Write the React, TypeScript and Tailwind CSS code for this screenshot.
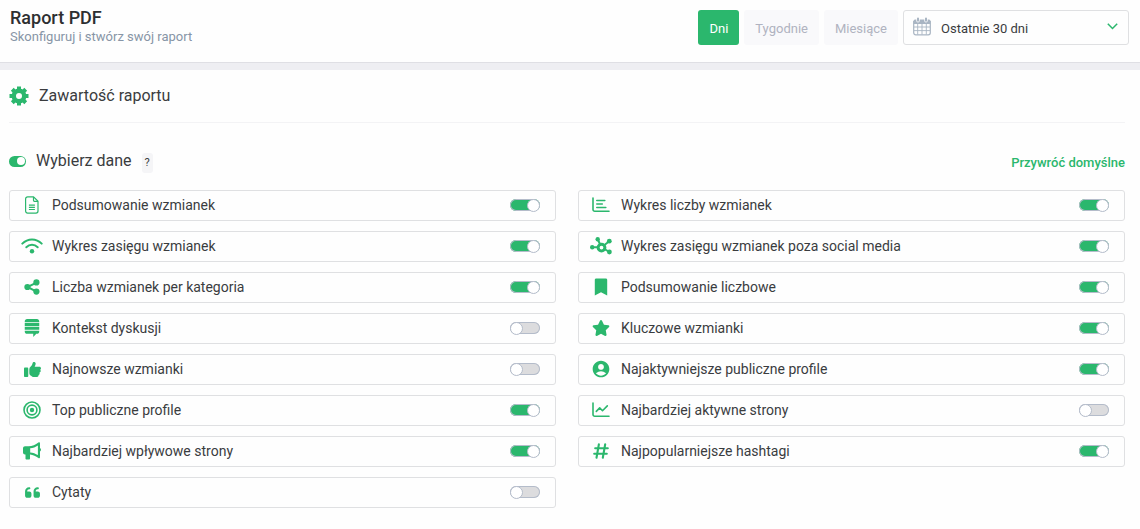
import { useState } from 'react'
import type { ReactNode } from 'react'
import { FaStackExchange, FaStar } from 'react-icons/fa'
import { FaQuoteLeft, FaThumbsUp } from 'react-icons/fa6'
import { MdAccountCircle } from 'react-icons/md'

const GearIcon = () => (
  <svg viewBox="0 0 20 20" width="20" height="20" fill="none" stroke="#2bb76d">
    <circle cx="10" cy="10" r="5.2" strokeWidth="4.4" />
    {[0, 45, 90, 135].map((a) => (
      <g key={a} transform={`rotate(${a} 10 10)`} strokeWidth="4">
        <path d="M10 .5v4.5M10 15v4.5" />
      </g>
    ))}
  </svg>
)

const FileIcon = () => (
  <svg viewBox="0 0 14 18" width="14" height="18" fill="none" stroke="currentColor" strokeWidth="1.2" strokeLinejoin="round">
    <path d="M2.6 .9h6l4.4 4.3v9.9a2 2 0 0 1-2 2H2.6a2 2 0 0 1-2-2V2.9a2 2 0 0 1 2-2z" />
    <path d="M8.5 1v3.2a1.2 1.2 0 0 0 1.2 1.2H13" />
    <path d="M3.9 9.2h6M3.9 11.4h6M3.9 13.5h6" />
  </svg>
)

const WifiIcon = () => (
  <svg viewBox="0 0 22 16" width="22" height="16" fill="none" stroke="currentColor" strokeWidth="2" strokeLinecap="round">
    <path d="M1.3 5.6C6.8 0 15.2 0 20.7 5.6" />
    <path d="M5.3 9.2c3.3-3.2 8.1-3.2 11.4 0" />
    <circle cx="11" cy="13.2" r="2.2" fill="currentColor" stroke="none" />
  </svg>
)

const ShareIcon = () => (
  <svg viewBox="0 0 16 16" width="16" height="16" fill="currentColor">
    <path d="M12.6 3.6L3.4 8l9.2 4.6" fill="none" stroke="currentColor" strokeWidth="2" />
    <circle cx="12.4" cy="3.4" r="3.1" />
    <circle cx="3.4" cy="8" r="3.1" />
    <circle cx="12.4" cy="12.6" r="3.1" />
  </svg>
)

const TargetIcon = () => (
  <svg viewBox="0 0 18 18" width="18" height="18" fill="none" stroke="currentColor" strokeWidth="1.6">
    <circle cx="9" cy="9" r="8" />
    <circle cx="9" cy="9" r="4.9" />
    <circle cx="9" cy="9" r="2.2" fill="currentColor" stroke="none" />
  </svg>
)

const MegaphoneIcon = () => (
  <svg viewBox="0 0 18 18" width="18" height="18" fill="currentColor">
    <path
      fillRule="evenodd"
      d="M15.4 .5c.7-.5 1.6-.1 1.6.8v4.8c.6.3 1 .9 1 1.7s-.4 1.4-1 1.7v5.8c0 .9-.9 1.3-1.6.8-2.5-2.1-5.2-3.4-8.4-3.7v4c0 .6-.4 1.100-1 1.100H3.600c-.6 0-1.100-.5-1.100-1.100v-4H2c-1.100 0-2-.9-2-2V6.200c0-1.100.9-2 2-2h3.600c3.700 0 7-1.300 9.800-3.700zM14.900 3.600C12.600 5.200 10 6.100 7.200 6.300v4.100c2.800.2 5.400 1.100 7.700 2.700z"
    />
  </svg>
)

const BarsIcon = () => (
  <svg viewBox="0 0 18 16" width="18" height="16" fill="none" stroke="currentColor" strokeWidth="1.6" strokeLinecap="round" strokeLinejoin="round">
    <path d="M1 1v11.5a1.7 1.7 0 0 0 1.7 1.7H17" />
    <path d="M4.8 3.5h8M4.8 7h5.5M4.8 10.5h9" />
  </svg>
)

const TrendIcon = () => (
  <svg viewBox="0 0 18 16" width="18" height="16" fill="none" stroke="currentColor" strokeWidth="1.6" strokeLinecap="round" strokeLinejoin="round">
    <path d="M1 1v11.5a1.7 1.7 0 0 0 1.7 1.7H17" />
    <path d="M4.3 9.4l3.4-3.5 2.8 2.8 4.8-4.8" />
  </svg>
)

const NetworkIcon = () => (
  <svg viewBox="0 0 22 18" width="22" height="18" fill="currentColor">
    <path d="M11.5 10.3H2M11.5 10.3L7.8 2.5M11.5 10.3l7.8-6M11.5 10.3l8 4.7" fill="none" stroke="currentColor" strokeWidth="2" />
    <circle cx="11.5" cy="10.6" r="3.4" fill="#fefefe" stroke="currentColor" strokeWidth="3" />
    <circle cx="2.2" cy="10.3" r="2.2" />
    <circle cx="7.7" cy="2.3" r="2.2" />
    <circle cx="19.3" cy="4.2" r="2.4" />
    <circle cx="19.4" cy="15" r="2.4" />
  </svg>
)

const BookmarkIcon = () => (
  <svg viewBox="0 0 14 18" width="14" height="18" fill="currentColor">
    <path d="M2.2 .5h9.6c.8 0 1.4.6 1.4 1.4v15.6L7 14.2.8 17.5V1.9C.8 1.1 1.4.5 2.2.5z" />
  </svg>
)

const HashIcon = () => (
  <svg viewBox="0 0 16 16" width="16" height="16" fill="none" stroke="currentColor" strokeWidth="2.1" strokeLinecap="round">
    <path d="M5.9 1.3L3.5 14.7M12.2 1.3L9.8 14.7M2.2 5.2h12.6M1.2 10.8h12.6" />
  </svg>
)

const CalendarIcon = () => (
  <svg viewBox="0 0 18 19" width="18" height="19" fill="none" stroke="#a9b5c3">
    <path d="M.7 4.5h16.6v11.3a2 2 0 0 1-2 2H2.7a2 2 0 0 1-2-2z" strokeWidth="1.2" />
    <path d="M4.7 6.5v11M9 6.5v11M13.3 6.5v11M1 10h16M1 13.6h16" strokeWidth=".9" />
    <path d="M2 2.5h14a1.5 1.5 0 0 1 1.5 1.5v3H.5V4A1.5 1.5 0 0 1 2 2.5z" fill="#a9b5c3" stroke="none" />
    <path d="M5 1.6v2.2M13 1.6v2.2" stroke="#fefefe" strokeWidth="3.4" strokeLinecap="round" />
    <path d="M5 1.5v2.3M13 1.5v2.3" strokeWidth="2" strokeLinecap="round" />
  </svg>
)

type Item = { id: string; label: string; icon: ReactNode; on: boolean }

const leftItems: Item[] = [
  { id: 'summary', label: 'Podsumowanie wzmianek', icon: <FileIcon />, on: true },
  { id: 'reach', label: 'Wykres zasięgu wzmianek', icon: <WifiIcon />, on: true },
  { id: 'category', label: 'Liczba wzmianek per kategoria', icon: <ShareIcon />, on: true },
  { id: 'context', label: 'Kontekst dyskusji', icon: <FaStackExchange size={18} />, on: false },
  { id: 'latest', label: 'Najnowsze wzmianki', icon: <FaThumbsUp size={17} />, on: false },
  { id: 'top-profiles', label: 'Top publiczne profile', icon: <TargetIcon />, on: true },
  { id: 'influential', label: 'Najbardziej wpływowe strony', icon: <MegaphoneIcon />, on: true },
  { id: 'quotes', label: 'Cytaty', icon: <FaQuoteLeft size={17} />, on: false },
]

const rightItems: Item[] = [
  { id: 'count-chart', label: 'Wykres liczby wzmianek', icon: <BarsIcon />, on: true },
  { id: 'reach-no-social', label: 'Wykres zasięgu wzmianek poza social media', icon: <NetworkIcon />, on: true },
  { id: 'numbers', label: 'Podsumowanie liczbowe', icon: <BookmarkIcon />, on: true },
  { id: 'key', label: 'Kluczowe wzmianki', icon: <FaStar size={18} />, on: true },
  { id: 'active-profiles', label: 'Najaktywniejsze publiczne profile', icon: <MdAccountCircle size={20} />, on: true },
  { id: 'active-sites', label: 'Najbardziej aktywne strony', icon: <TrendIcon />, on: false },
  { id: 'hashtags', label: 'Najpopularniejsze hashtagi', icon: <HashIcon />, on: true },
]

const periods = ['Dni', 'Tygodnie', 'Miesiące']

const defaults = Object.fromEntries([...leftItems, ...rightItems].map((i) => [i.id, i.on]))

export default function App() {
  const [period, setPeriod] = useState('Dni')
  const [enabled, setEnabled] = useState<Record<string, boolean>>(defaults)

  const anyOn = Object.values(enabled).some(Boolean)

  const setAll = (on: boolean) => {
    setEnabled(Object.fromEntries(Object.keys(defaults).map((id) => [id, on])))
  }

  const renderItem = (item: Item) => (
    <li key={item.id}>
      <label className="flex h-[31px] cursor-pointer items-center rounded-[3px] border border-[#dfe0e2] pr-[15px] pb-px pl-[11px]">
        <span className="flex w-[22px] justify-center text-[#2bb76d]">{item.icon}</span>
        <span className="ml-[9px] flex-1 text-sm">{item.label}</span>
        <input
          type="checkbox"
          checked={enabled[item.id]}
          onChange={(e) => setEnabled({ ...enabled, [item.id]: e.target.checked })}
          className="flex h-3 w-[30px] cursor-pointer appearance-none items-center rounded-full bg-[#dcdcde] ring-1 ring-[#b4bcca] ring-inset before:size-[13px] before:rounded-full before:border before:border-[#b4bcca] before:bg-white checked:justify-end checked:bg-[#2bb76d]"
        />
      </label>
    </li>
  )

  return (
    <div className="min-h-screen bg-[#fefefe] font-['Roboto',sans-serif] text-[#3a3c3e]">
      <header className="flex justify-between border-b border-[#dfdfe4] pt-[9px] pr-[11px] pb-[15px] pl-[10px]">
        <div>
          <h1 className="text-lg leading-[18px] font-medium text-[#2d2f31]">Raport PDF</h1>
          <p className="text-[13px] leading-5 text-[#8795a6]">Skonfiguruj i stwórz swój raport</p>
        </div>
        <div className="mt-px flex h-[35px] gap-[5px]">
          {periods.map((p) => (
            <button
              key={p}
              onClick={() => setPeriod(p)}
              className={`cursor-pointer rounded-[3px] px-[11px] pt-0.5 text-[13px] ${period === p ? 'bg-[#2bb76d] text-white' : 'bg-[#f9f9fb] text-[#b0b3c0]'}`}
            >
              {p}
            </button>
          ))}
          <div className="relative">
            <select
              aria-label="Zakres dat"
              className="h-full w-[226px] cursor-pointer appearance-none rounded-[3px] border border-[#dfe0e2] pt-0.5 pl-[37px] text-[13px]"
            >
              <option>Ostatnie 30 dni</option>
            </select>
            <span className="pointer-events-none absolute top-[7px] left-[10px]">
              <CalendarIcon />
            </span>
            <svg viewBox="0 0 11 7" width="11" height="7" className="pointer-events-none absolute top-[13px] right-[11px]" fill="none" stroke="#2bb76d" strokeWidth="1.5">
              <path d="M.8 .8l4.7 4.7L10.2 .8" />
            </svg>
          </div>
        </div>
      </header>
      <div className="h-[7px] bg-[#eeeef2]" />

      <main className="pr-[15px] pl-[9px]">
        <div className="flex h-[53px] items-center gap-[10px] border-b border-[#f3f3f5]">
          <GearIcon />
          <h2 className="text-base">Zawartość raportu</h2>
        </div>

        <div className="flex items-center justify-between pt-[26px] pb-[17px]">
          <div className="flex items-center">
            <label className="flex cursor-pointer items-center gap-[10px] text-base">
              <input
                type="checkbox"
                checked={anyOn}
                onChange={(e) => setAll(e.target.checked)}
                className="flex h-[11px] w-[17px] cursor-pointer appearance-none items-center rounded-full bg-[#c4c8ce] px-px before:size-2 before:rounded-full before:bg-white checked:justify-end checked:bg-[#2bb76d]"
              />
              Wybierz dane
            </label>
            <button aria-label="Pomoc" className="mt-1 ml-[10px] h-5 w-[11px] cursor-help rounded-[3px] bg-[#f5f5f7] text-[11px]">
              ?
            </button>
          </div>
          <button onClick={() => setEnabled(defaults)} className="mt-1 cursor-pointer text-[13px] font-medium text-[#2bb76d]">
            Przywróć domyślne
          </button>
        </div>

        <div className="grid grid-cols-2 gap-[22px] pb-5">
          <ul className="flex flex-col gap-[10px]">{leftItems.map(renderItem)}</ul>
          <ul className="flex flex-col gap-[10px]">{rightItems.map(renderItem)}</ul>
        </div>
      </main>
    </div>
  )
}
